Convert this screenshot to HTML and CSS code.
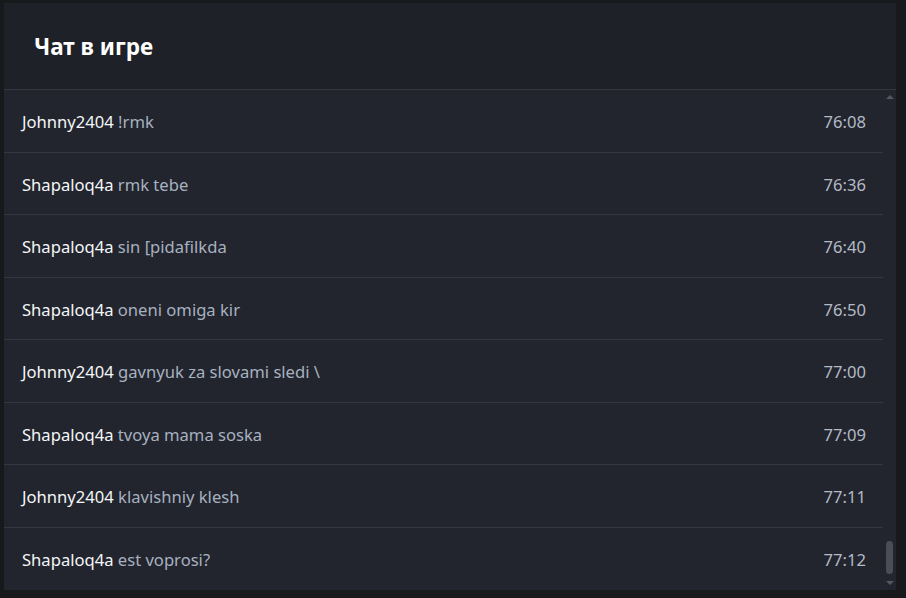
FILE: index.html
```html
<!DOCTYPE html>
<html lang="ru">
<head>
<meta charset="utf-8">
<link rel="stylesheet" href="styles.css">
</head>
<body>
<div class="panel">
  <div class="header"><h1 class="title">Чат в игре</h1></div>
  <div class="body">
    <div class="list">
      <div class="row"><span class="msg"><span class="user">Johnny2404</span> !rmk</span><span class="time">76:08</span></div>
      <div class="row"><span class="msg"><span class="user">Shapaloq4a</span> rmk tebe</span><span class="time">76:36</span></div>
      <div class="row"><span class="msg"><span class="user">Shapaloq4a</span> sin [pidafilkda</span><span class="time">76:40</span></div>
      <div class="row"><span class="msg"><span class="user">Shapaloq4a</span> oneni omiga kir</span><span class="time">76:50</span></div>
      <div class="row"><span class="msg"><span class="user">Johnny2404</span> gavnyuk za slovami sledi \</span><span class="time">77:00</span></div>
      <div class="row"><span class="msg"><span class="user">Shapaloq4a</span> tvoya mama soska</span><span class="time">77:09</span></div>
      <div class="row"><span class="msg"><span class="user">Johnny2404</span> klavishniy klesh</span><span class="time">77:11</span></div>
      <div class="row last"><span class="msg"><span class="user">Shapaloq4a</span> est voprosi?</span><span class="time">77:12</span></div>
    </div>
    <div class="scrollbar">
      <span class="arrow up"></span>
      <span class="track"><span class="thumb"></span></span>
      <span class="arrow down"></span>
    </div>
  </div>
</div>
</body>
</html>
```
FILE: styles.css
```css
html, body {
  margin: 0;
  padding: 0;
  background: #18191c;
  font-family: "Noto Sans", "Open Sans", sans-serif;
}
body {
  padding: 3px 10px 8px 4px;
}
.panel {
  width: 892px;
  height: 587px;
  display: flex;
  flex-direction: column;
  background: #22252d;
}
.header {
  height: 86px;
  flex: none;
  background: #1f2128;
  border-bottom: 1px solid #35373f;
  display: flex;
  align-items: center;
  padding-left: 30px;
}
.title {
  margin: 0;
  color: #ffffff;
  font-size: 22.5px;
  font-weight: 700;
}
.body {
  flex: 1;
  display: flex;
  min-height: 0;
}
.list {
  flex: 1;
  display: flex;
  flex-direction: column;
}
.row {
  box-sizing: border-box;
  height: 62.5px;
  border-bottom: 1px solid #35373f;
  display: flex;
  align-items: center;
  justify-content: space-between;
  padding: 2px 17px 0 18px;
  font-size: 16.6px;
}
.row.last {
  border-bottom: none;
}
.msg {
  color: #a7b1c0;
}
.user {
  color: #f4f6f8;
}
.time {
  color: #b3bac6;
}
.scrollbar {
  width: 13px;
  flex: none;
  display: flex;
  flex-direction: column;
  align-items: center;
  background: #22252d;
}
.arrow {
  width: 0;
  height: 0;
  border-left: 4px solid transparent;
  border-right: 4px solid transparent;
  margin: 5px 0;
}
.arrow.up {
  border-bottom: 4px solid #55575e;
}
.arrow.down {
  border-top: 4px solid #55575e;
}
.track {
  flex: 1;
  display: flex;
  flex-direction: column;
  justify-content: flex-end;
}
.thumb {
  width: 7px;
  height: 33px;
  border-radius: 4px;
  background: #4a4d55;
  margin-bottom: 2px;
}
```
